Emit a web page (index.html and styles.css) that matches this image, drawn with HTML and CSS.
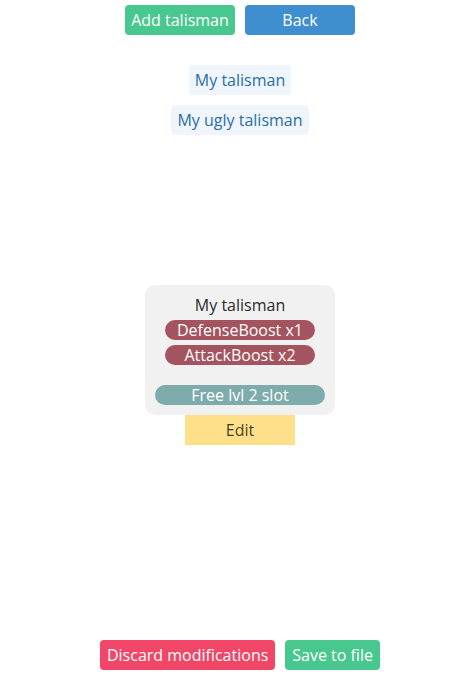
FILE: index.html
```html
<!DOCTYPE html>
<html lang="en">
<head>
<meta charset="utf-8">
<title>Talismans</title>
<link rel="stylesheet" href="styles.css">
</head>
<body>
<div class="app">
  <nav class="topbar">
    <button class="btn btn-success btn-fixed">Add talisman</button>
    <button class="btn btn-info btn-fixed">Back</button>
  </nav>
  <ul class="talisman-list">
    <li><button class="btn btn-light">My talisman</button></li>
    <li><button class="btn btn-light">My ugly talisman</button></li>
  </ul>
  <section class="talisman">
    <div class="card">
      <div class="card-title">My talisman</div>
      <div class="decos">
        <span class="pill pill-deco">DefenseBoost x1</span>
        <span class="pill pill-deco">AttackBoost x2</span>
      </div>
      <div class="slots">
        <span class="pill pill-slot">Free lvl 2 slot</span>
      </div>
    </div>
    <button class="btn btn-warning btn-edit">Edit</button>
  </section>
  <footer class="footer">
    <button class="btn btn-danger btn-wide">Discard modifications</button>
    <button class="btn btn-success btn-wide">Save to file</button>
  </footer>
</div>
</body>
</html>
```
FILE: styles.css
```css
* { box-sizing: border-box; }
html, body { margin: 0; padding: 0; background: #fff; }
body {
  font-family: "Open Sans", "Noto Sans", sans-serif;
  font-size: 16px;
  color: #363636;
}
.app {
  height: 100vh;
  display: flex;
  flex-direction: column;
  align-items: center;
  padding: 5px 0 5px 9px;
}
.btn {
  font-family: inherit;
  font-size: 16px;
  height: 30px;
  line-height: 30px;
  padding: 0 6px;
  border: none;
  border-radius: 4px;
  cursor: pointer;
  white-space: nowrap;
  color: #fff;
}
.btn-fixed { width: 110px; padding: 0; }
.btn-wide { padding: 0 7px; }
.btn-success { background: #48c78e; }
.btn-info { background: #3e8ed0; }
.btn-danger { background: #f14668; }
.btn-warning { background: #ffe08a; color: rgba(0,0,0,0.75); }
.btn-light { background: #eff5fb; color: #296fa8; }
.topbar { display: flex; gap: 10px; }
.talisman-list {
  list-style: none;
  margin: 30px 0 0;
  padding: 0;
  display: flex;
  flex-direction: column;
  align-items: center;
  gap: 10px;
}
.talisman {
  margin-top: 150px;
  display: flex;
  flex-direction: column;
  align-items: center;
}
.card {
  width: 190px;
  background: #f1f1f1;
  border-radius: 10px;
  padding: 10px;
  display: flex;
  flex-direction: column;
  align-items: center;
  gap: 5px;
}
.card-title { line-height: 20px; color: #2b2b2b; }
.decos, .slots {
  display: flex;
  flex-direction: column;
  gap: 5px;
  width: 100%;
  align-items: center;
}
.slots { margin-top: 15px; }
.pill {
  display: block;
  height: 20px;
  line-height: 20px;
  border-radius: 10px;
  text-align: center;
  color: #fff;
}
.pill-deco { width: 150px; background: #a4545e; }
.pill-slot { width: 170px; background: #7eabab; }
.btn-edit { width: 110px; border-radius: 0; }
.footer {
  margin-top: auto;
  display: flex;
  gap: 10px;
}
```
